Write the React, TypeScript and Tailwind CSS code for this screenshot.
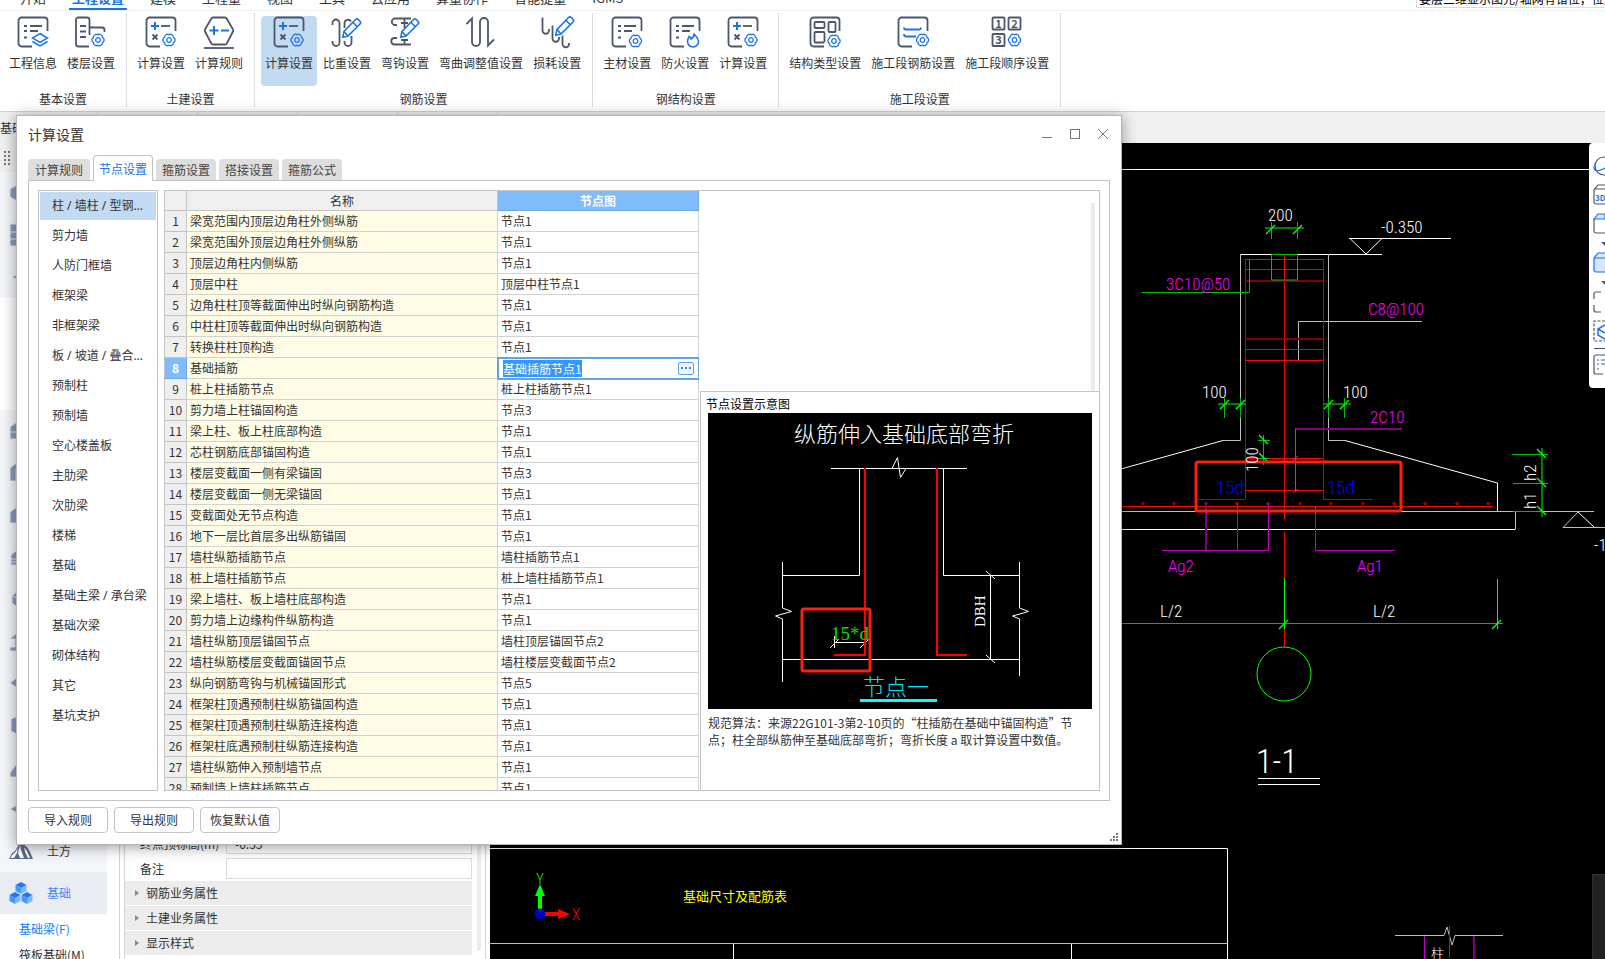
import * as React from "react"
import { useEffect, useRef, useState } from "react"
import { clsx } from "clsx"

const INK = "#4d566b"
const BLUE = "#1a73e8"

/* ---------- ribbon icons, all drawn on a 32px box ---------- */

const Gear = ({ x = 24, y = 24 }: { x?: number; y?: number }) => (
  <g transform={`translate(${x} ${y})`} stroke={BLUE} strokeWidth="1.3">
    <path d="M4.5 2.6A2.9 2.9 0 0 1 0 5.2A2.9 2.9 0 0 1-4.5 2.6A2.9 2.9 0 0 1-4.5-2.6A2.9 2.9 0 0 1 0-5.2A2.9 2.9 0 0 1 4.5-2.6A2.9 2.9 0 0 1 4.5 2.6Z" />
    <circle r="2.3" />
  </g>
)

const Pencil = () => (
  <g stroke={BLUE} strokeWidth="1.6">
    <path d="M24.5 3.5a2 2 0 0 1 2.800 0l1.700 1.700a2 2 0 0 1 0 2.800L17 20l-5.200 1.200L13 15.500Z" />
    <path d="M21.800 6.200L26.300 10.700M13 15.500L17 20" />
  </g>
)

const Frame = () => <path d="M15 30.500H4.500a3 3 0 0 1-3-3V4.500a3 3 0 0 1 3-3H27.500a3 3 0 0 1 3 3V15" />

const Lines = () => <path d="M7 10H10M13 10H25M7 15H10M13 15H21M7 21.500H10" />

const Sheet = () => (
  <>
    <Frame />
    <path d="M16 10H25" />
    <path d="M7.500 18.500L12.500 23.500M12.500 18.500L7.500 23.500" />
    <path d="M6 10H14M10 6V14" stroke={BLUE} strokeWidth="2" />
    <Gear />
  </>
)

const icons: Record<string, React.ReactNode> = {
  info: (
    <>
      <Frame />
      <Lines />
      <g stroke={BLUE} strokeWidth="1.5">
        <path d="M23 17.500L30.500 22L23 26.500L15.500 22Z" />
        <path d="M15.500 25.500L23 30L30.500 25.500" />
      </g>
    </>
  ),
  floors: (
    <>
      <path d="M14 30.500H3.500a2.500 2.500 0 0 1-2.500-2.500V4a2.500 2.500 0 0 1 2.500-2.500H12A2.500 2.500 0 0 1 14.500 4V19M14.500 11.500H27a2.500 2.500 0 0 1 2.500 2.500V16" />
      <path d="M5 10H11M5 15.500H11M5 21H11" />
      <Gear x={23} />
    </>
  ),
  calc: <Sheet />,
  rule: (
    <>
      <path d="M10 1.500H22a2 2 0 0 1 1.700 1L30 13.500a2 2 0 0 1 0 2L23.700 27.500a2 2 0 0 1-1.700 1H10a2 2 0 0 1-1.700-1L2 15.500a2 2 0 0 1 0-2L8.300 2.500a2 2 0 0 1 1.700-1Z" />
      <path d="M1 32H31" />
      <path d="M6.500 14.500H15.500M11 10V19M18 14.500H26" stroke={BLUE} strokeWidth="2" />
    </>
  ),
  weight: (
    <>
      <path d="M1.500 9V7a3.500 3.500 0 0 1 7 0V26.500a3.500 3.500 0 0 1-7 0V25" />
      <path d="M13.500 12V7A3.500 3.500 0 0 1 20 5.500M20.500 20V26.500a3.500 3.500 0 0 1-7 0V25" />
      <Pencil />
    </>
  ),
  hook: (
    <>
      <path d="M22 2.500H5A3.500 3.500 0 0 0 5 9H8" />
      <path d="M8 22H5A3.300 3.300 0 0 0 5 28.500H22M15.500 2.500V12M15.500 23.500V28.500M12 7H19M12 24H19" />
      <Pencil />
    </>
  ),
  bend: <path d="M1.500 8L7 2.500V26a4 4 0 0 0 8 0V6A4 4 0 0 1 23 6V29.500L29 23.500" />,
  loss: (
    <>
      <path d="M1.500 1.500V14.500a3.200 3.200 0 0 0 6.500 0V13M11.500 9.500V22.500a3.200 3.200 0 0 0 6.500 0V21M21.500 19.500V28a3.200 3.200 0 0 0 6.500 0V27" />
      <g transform="translate(3 -2)">
        <Pencil />
      </g>
    </>
  ),
  material: (
    <>
      <Frame />
      <Lines />
      <Gear x={24.5} y={25} />
    </>
  ),
  fire: (
    <>
      <Frame />
      <Lines />
      <path
        d="M25 17.500C25.500 20 29.500 21 29.500 25.500A5.500 5.500 0 0 1 18.500 25.500C18.500 23 19.500 22.500 20 20.500C21.500 21 22 22 22 23C24 22 25 20 25 17.500Z"
        stroke={BLUE}
        strokeWidth="1.5"
      />
    </>
  ),
  structure: (
    <>
      <Frame />
      <rect x="5.500" y="6" width="10" height="6" rx="1" />
      <rect x="19.500" y="6" width="7" height="10" rx="1" />
      <path d="M15.500 26.500H6.500a1 1 0 0 1-1-1V17a1 1 0 0 1 1-1H14.500a1 1 0 0 1 1 1V26" />
      <Gear x={25} y={25} />
    </>
  ),
  section: (
    <>
      <Frame />
      <path d="M7 11.500C7 13.500 8 13.500 9 13.500H22C23.500 13.500 24 13.500 24 11.500M7 18C7 20.500 8 20.500 9 20.500H19" stroke={BLUE} strokeWidth="1.8" />
      <Gear x={25.500} />
    </>
  ),
  order: (
    <>
      <rect x="1.500" y="1.500" width="12" height="12" rx="1" />
      <rect x="17.500" y="1.500" width="12" height="12" rx="1" />
      <rect x="1.500" y="18" width="12" height="12" rx="1" />
      <g fill={INK} stroke="none" fontSize="11" fontWeight="700" textAnchor="middle">
        <text x="7.500" y="11.500">1</text>
        <text x="23.500" y="11.500">2</text>
        <text x="7.500" y="28">3</text>
      </g>
      <Gear x={23.500} />
    </>
  ),
}

const menu = ["开始", "工程设置", "建模", "工程量", "视图", "工具", "云应用", "算量协作", "智能提量", "IGMS"]

const ribbon = [
  { title: "基本设置", items: [["工程信息", "info"], ["楼层设置", "floors"]] },
  { title: "土建设置", items: [["计算设置", "calc"], ["计算规则", "rule"]] },
  {
    title: "钢筋设置",
    items: [["计算设置", "calc"], ["比重设置", "weight"], ["弯钩设置", "hook"], ["弯曲调整值设置", "bend"], ["损耗设置", "loss"]],
  },
  { title: "钢结构设置", items: [["主材设置", "material"], ["防火设置", "fire"], ["计算设置", "calc"]] },
  {
    title: "施工段设置",
    items: [["结构类型设置", "structure"], ["施工段钢筋设置", "section"], ["施工段顺序设置", "order"]],
  },
]

const tabs = ["计算规则", "节点设置", "箍筋设置", "搭接设置", "箍筋公式"]

const categories = [
  "柱 / 墙柱 / 型钢...", "剪力墙", "人防门框墙", "框架梁", "非框架梁", "板 / 坡道 / 叠合...",
  "预制柱", "预制墙", "空心楼盖板", "主肋梁", "次肋梁", "楼梯", "基础", "基础主梁 / 承台梁",
  "基础次梁", "砌体结构", "其它", "基坑支护",
]

const rows = [
  ["梁宽范围内顶层边角柱外侧纵筋", "节点1"],
  ["梁宽范围外顶层边角柱外侧纵筋", "节点1"],
  ["顶层边角柱内侧纵筋", "节点1"],
  ["顶层中柱", "顶层中柱节点1"],
  ["边角柱柱顶等截面伸出时纵向钢筋构造", "节点1"],
  ["中柱柱顶等截面伸出时纵向钢筋构造", "节点1"],
  ["转换柱柱顶构造", "节点1"],
  ["基础插筋", "基础插筋节点1"],
  ["桩上柱插筋节点", "桩上柱插筋节点1"],
  ["剪力墙上柱锚固构造", "节点3"],
  ["梁上柱、板上柱底部构造", "节点1"],
  ["芯柱钢筋底部锚固构造", "节点1"],
  ["楼层变截面一侧有梁锚固", "节点3"],
  ["楼层变截面一侧无梁锚固", "节点1"],
  ["变截面处无节点构造", "节点1"],
  ["地下一层比首层多出纵筋锚固", "节点1"],
  ["墙柱纵筋插筋节点", "墙柱插筋节点1"],
  ["桩上墙柱插筋节点", "桩上墙柱插筋节点1"],
  ["梁上墙柱、板上墙柱底部构造", "节点1"],
  ["剪力墙上边缘构件纵筋构造", "节点1"],
  ["墙柱纵筋顶层锚固节点", "墙柱顶层锚固节点2"],
  ["墙柱纵筋楼层变截面锚固节点", "墙柱楼层变截面节点2"],
  ["纵向钢筋弯钩与机械锚固形式", "节点5"],
  ["框架柱顶遇预制柱纵筋锚固构造", "节点1"],
  ["框架柱顶遇预制柱纵筋连接构造", "节点1"],
  ["框架柱底遇预制柱纵筋连接构造", "节点1"],
  ["墙柱纵筋伸入预制墙节点", "节点1"],
  ["预制墙上墙柱插筋节点", "节点1"],
]

const Ribbon = () => (
  <header className="shrink-0 bg-white">
    <div className="flex h-[11px] items-end justify-between overflow-hidden border-b border-[#f0f0f0]">
      <nav className="flex items-end gap-5 pl-[17px] text-[13px] leading-4">
        {menu.map((name, i) => (
          <a
            key={name}
            href="#"
            className={clsx(
              "shrink-0 border-b-2 px-[3px] pb-0.5",
              i === 1 ? "border-[#1a73e8] font-bold text-[#1a73e8]" : "border-transparent",
            )}
          >
            {name}
          </a>
        ))}
      </nav>
      <div className="mb-0.5 w-[189px] shrink-0 overflow-hidden border-b border-l border-[#dcdcdc] pl-0.5 leading-4 whitespace-nowrap text-black">
        娄层三维显示图元/轴网有错位，位置
      </div>
    </div>

    <div className="flex border-b border-[#d4d4d4] pt-0.5 pb-1">
      {ribbon.map((group, g) => (
        <section key={group.title} className="group flex shrink-0 flex-col items-center border-r border-[#dcdcdc]">
          <div className="flex gap-0.5 pt-[3px] pr-[7px] pl-1.5 group-first:pl-[5px]">
            {group.items.map(([label, icon], i) => (
              <button
                key={label}
                className={clsx(
                  "flex h-[70px] flex-col items-center gap-[7px] rounded px-1",
                  g === 2 && i === 0 && "bg-[#c2daf2]",
                )}
              >
                <svg viewBox="0 0 32 32" className="size-8 overflow-visible" fill="none" stroke={INK} strokeWidth="1.800">
                  {icons[icon]}
                </svg>
                <span className="leading-4">{label}</span>
              </button>
            ))}
          </div>
          <h2 className="mt-[5px] leading-4">{group.title}</h2>
        </section>
      ))}
    </div>
  </header>
)

/* ---------- left component list ---------- */

const glyphs = [
  <path d="M1 8L12 2L23 8V16L12 22L1 16Z" />,
  <path d="M1 1H23V23H1ZM1 9H23M1 16H23" />,
  <path d="M3 12L14 7L22 12L14 17Z" />,
  <path d="M1 8L8 3H22V20H1ZM1 13H22M8 3V20" />,
  <path d="M1 7L6 3H22V16H16V8H7V20H1Z" />,
  <path d="M1 9L11 2V20H1ZM12 2H22V20H12Z" />,
  <path d="M2 10L12 2L22 10V20H2ZM2 14H22M2 17H22" />,
  <path d="M3 9L10 3L20 6V16L10 21L3 16ZM3 9L10 12V21" />,
  <path d="M1 10L10 2L22 10H15V18H22V22H1V18H6V10Z" />,
  <path d="M1 12L10 5L22 12L10 18ZM7 12H14" />,
  <path d="M2 6L12 2L22 6V18L12 23L2 18ZM7 10H12V15" />,
  <path d="M1 18L12 3L23 18V22H1Z" />,
  <path d="M1 12L12 6L23 12L12 18Z" />,
]

const Glyph = ({ i }: { i: number }) => (
  <div className="flex h-[42px] shrink-0 items-center pl-[9px]">
    <svg viewBox="0 0 24 24" className="size-6" fill="#8b9cc0" stroke="#e4e9f2" strokeWidth="1">
      {glyphs[i]}
    </svg>
  </div>
)

const Sidebar = () => (
  <aside className="flex w-[107px] shrink-0 flex-col overflow-hidden">
    <div className="flex h-[29px] shrink-0 items-center bg-[#f0f0f0] pl-1">
      <svg viewBox="0 0 6 14" className="h-3.5 w-1.5" fill="#777">
        {[0, 4, 8, 12].map((y) => (
          <path key={y} d={`M0 ${y}h2v2h-2zM4 ${y}h2v2h-2z`} />
        ))}
      </svg>
    </div>
    <div className="bg-[#f4f6f9]">{[0, 1, 2].map((i) => <Glyph key={i} i={i} />)}</div>
    <div className="h-28 shrink-0 bg-white" />
    <div className="bg-[#f4f6f9]">
      {[3, 4, 5, 6, 7, 8, 9, 10, 11, 12].map((i) => (
        <Glyph key={i} i={i} />
      ))}
      <div className="flex h-[42px] items-center gap-3.5 pl-[9px]">
        <svg viewBox="0 0 24 16" className="h-4 w-6">
          <path d="M0 16L3 10L6 8L9 3L11 0L14 1L18 4L21 9L24 16Z" fill="#5c6b8f" />
          <path d="M1.500 15L4 11L6.500 9L9 5L8 10L5 15ZM11 2L12 7L15 15H11L9 10ZM15 4L18 8L21 15H19L16 9Z" fill="#fff" />
        </svg>
        土方
      </div>
    </div>
    <div className="flex h-[42px] shrink-0 items-center gap-3.5 bg-[#e9ecf1] pl-[9px] text-[#3f86f3]">
      <svg viewBox="0 0 24 22" className="h-[22px] w-6">
        {[[12, 0], [6, 10], [18, 10]].map(([x, y]) => (
          <g key={x} transform={`translate(${x} ${y})`}>
            <path d="M0 0L5.500 3L0 6L-5.500 3Z" fill="#1f78f0" />
            <path d="M-5.500 3L0 6V12L-5.500 9Z" fill="#4696fa" />
            <path d="M5.500 3L0 6V12L5.500 9Z" fill="#7db6fb" />
          </g>
        ))}
      </svg>
      基础
    </div>
    <a href="#" className="mt-0.5 shrink-0 pl-[19px] leading-[26px] text-[#0a84ff]">基础梁(F)</a>
    <a href="#" className="shrink-0 pl-[19px] leading-[26px]">筏板基础(M)</a>
  </aside>
)

const Properties = () => (
  <aside className="ml-3 flex w-[367px] shrink-0 border-x border-[#d4d4d4] pl-1">
    <div className="flex flex-1 flex-col justify-end border-l border-[#d4d4d4] pb-[3px]">
      {[["终点顶标高(m)", "-0.55"], ["备注", ""]].map(([label, value]) => (
        <label key={label} className="flex h-[25px] items-center">
          <span className="w-[101px] shrink-0 pl-[15px]">{label}</span>
          <input defaultValue={value} className="h-[21px] w-[246px] border border-[#dcdcdc] px-2 outline-none" />
        </label>
      ))}
      {["钢筋业务属性", "土建业务属性", "显示样式"].map((name) => (
        <button key={name} className="mb-px flex h-6 w-[347px] items-center gap-[7px] bg-[#ececec] pl-2.5">
          <svg viewBox="0 0 4 6" className="h-1.5 w-1" fill="#888">
            <path d="M0 0L4 3L0 6Z" />
          </svg>
          {name}
        </button>
      ))}
    </div>
    <div className="mr-1 mb-2 w-1 rounded-full bg-[#ececec]" />
  </aside>
)

/* ---------- CAD canvas ---------- */

const Slash = ({ x, y, flip = false }: { x: number; y: number; flip?: boolean }) => (
  <path d={flip ? `M${x - 5} ${y - 5}l9 9` : `M${x - 5} ${y + 5}l9 -9`} stroke="#00ff00" strokeWidth="1.5" />
)

const dots = [1143, 1174, 1206, 1237, 1268, 1300, 1331, 1363, 1394, 1425, 1457, 1488]

const Drawing = () => (
  <svg
    viewBox="490 143 1115 816"
    preserveAspectRatio="xMinYMin slice"
    className="absolute inset-0 h-full w-full font-['Roboto_Condensed','Liberation_Sans_Narrow','Noto_Sans_CJK_SC',sans-serif] font-light"
    fill="none"
  >
    <g stroke="#fff">
      <path d="M490 169.500H1605" />
      <path d="M1240.500 254.500H1382" />
      <path d="M1349 238.500H1451M1350 238.500L1366 254L1382 238.500" />
      <path d="M1121 469L1223 440.500M1345 440.500L1497.500 483V511" />
      <path d="M1121 529.500H1515" />
      <path d="M1578 512L1594 527" />
      <path d="M1258 778.500H1320M1258 784.500H1320" />
      <path d="M490 848.500H1227.500V959M733.500 943V959M1071.500 943V959" />
    </g>
    <g stroke="#c0c0c0">
      <path d="M1240.500 254V440.500H1223M1328.500 254V440.500H1345" />
      <path d="M1422 321.500H1298.500V360" />
      <path d="M1121 511.500H1594M1515.500 511V529.500" />
      <path d="M1578 512L1563 527.500H1605" />
      <path d="M490 943.500H1227" />
      <path d="M1395 935.500H1444L1447 927L1452 945L1455 935.500H1503" />
    </g>
    <g stroke="#ff0000">
      <path d="M1245.500 259V499M1323.500 259V499" stroke="#c80000" />
      <path d="M1284.500 255V519M1284.500 532V578M1284.500 629V647" />
      <path d="M1245 259.500H1323M1245 269.500H1323M1245 349.500H1323M1245 360.500H1323M1245 458.500H1323M1245 490.500H1323" />
      <path d="M1245 281H1323M1245 339H1323" stroke="#800000" strokeWidth="2" />
      <path d="M1198 499.500H1245M1323 499.500H1372" stroke="#c80000" />
      <path d="M1121 506.500H1493" />
      {dots.map((x) => (
        <circle key={x} cx={x} cy="503.500" r="1" />
      ))}
      <path d="M1449.500 926V958" />
    </g>
    <g stroke="#00c000">
      <path d="M1271.500 254.500H1297.500V280H1271.500Z" />
      <path d="M1142 292.500H1249.500V260" />
      <path d="M1271.500 222V239M1297.500 222V239M1224.500 398V418M1240.500 398V418M1328.500 398V418M1344.500 398V418" />
      <path d="M1265 228H1304M1218 404H1246M1323 404H1351M1542 448V517" stroke="#008000" strokeWidth="2" />
      <path d="M1263.500 435V465M1258 440.500H1270M1258 458.500H1270M1512 454.500H1548M1513 483.500H1548M1513 511.500H1542" />
      <path d="M1121 623.500H1503" />
    </g>
    <g stroke="#00ff00">
      <path d="M1284.500 578V629M1497.500 579V629" />
      <circle cx="1284" cy="674" r="27" />
    </g>
    <Slash x={1271} y={229} />
    <Slash x={1298} y={229} />
    <Slash x={1225} y={404} />
    <Slash x={1241} y={404} />
    <Slash x={1329} y={404} />
    <Slash x={1345} y={404} />
    <Slash x={1284} y={624} />
    <Slash x={1497} y={624} />
    <Slash x={1264} y={440} flip />
    <Slash x={1264} y={458} flip />
    <Slash x={1542} y={454} flip />
    <Slash x={1542} y={483} flip />
    <Slash x={1542} y={511} flip />
    <g stroke="#c000c0">
      <path d="M1402 429H1295" stroke="#800080" strokeWidth="2" />
      <path d="M1295.500 429V492M1293 460L1298 456M1293 493L1298 489" stroke="#ff00ff" />
      <path d="M1206 503V550M1474 936V959" stroke="#800080" strokeWidth="2" />
      <path d="M1237.500 503V550M1268.500 503V550.500M1162 550.500H1269M1315.500 507V550.500H1395M1424.500 936V959" />
    </g>
    <rect x="1196" y="462" width="205" height="49" rx="2" stroke="#ff1e10" strokeWidth="3" />

    <g fill="#fff" fontSize="17">
      <text x="1268" y="221">200</text>
      <text x="1381" y="233">-0.350</text>
      <text x="1202" y="398">100</text>
      <text x="1343" y="398">100</text>
      <text transform="translate(1258 472) rotate(-90)">100</text>
      <text transform="translate(1536 481) rotate(-90)">h2</text>
      <text transform="translate(1536 509) rotate(-90)">h1</text>
      <text x="1594" y="551">-1</text>
      <text x="1160" y="617">L/2</text>
      <text x="1373" y="617">L/2</text>
      <text x="1256" y="773" fontSize="34">1-1</text>
      <text x="1431" y="958" fontSize="13">柱</text>
    </g>
    <g fill="#ff00ff" fontSize="17">
      <text x="1166" y="290">3C10@50</text>
      <text x="1368" y="315">C8@100</text>
      <text x="1370" y="423">2C10</text>
      <text x="1168" y="572">Ag2</text>
      <text x="1357" y="572">Ag1</text>
    </g>
    <g fill="#0000ff" fontSize="19">
      <text x="1216" y="494">15d</text>
      <text x="1327" y="494">15d</text>
    </g>
    <text x="735" y="901" fontSize="13" fill="#ffff00" textAnchor="middle" className="font-normal">基础尺寸及配筋表</text>

    {/* UCS axes */}
    <path d="M540 910V894" stroke="#00ff00" strokeWidth="4" />
    <path d="M535 896L540 884L545 896Z" fill="#00ff00" />
    <path d="M544 914H558" stroke="#ff0000" strokeWidth="4" />
    <path d="M558 909L570 914L558 919Z" fill="#ff0000" />
    <circle cx="540" cy="914" r="5.500" fill="#0000c0" />
    <text x="540" y="884" fontSize="15" fill="#00ff00" textAnchor="middle">Y</text>
    <text x="576" y="920" fontSize="16" fill="#ff0000" textAnchor="middle">X</text>
  </svg>
)

const Palette = () => (
  <div className="absolute top-0 right-0 w-4 overflow-hidden rounded-l-sm bg-white">
    <svg viewBox="0 0 16 245" className="h-[245px] w-4" fill="none" stroke={INK} strokeWidth="1.200">
      <circle cx="15" cy="23" r="9" />
      <path d="M7 19C3 26 5 31 16 25" stroke={BLUE} />
      <path d="M16 61H7a2 2 0 0 1-2-2V47L9 42H16M5 46H16" />
      <text x="6" y="58" fontSize="8" fontWeight="700" fill={BLUE} stroke="none">3D</text>
      <path d="M5 76L9 71H16V76Z" fill="#d5e6fb" stroke={BLUE} />
      <path d="M16 90H7a2 2 0 0 1-2-2V76" />
      <path d="M12 99H16V103Z" fill={INK} stroke="none" />
      <path d="M16 129H7a2 2 0 0 1-2-2V115L9 110H16M5 115H16" fill="#d5e6fb" stroke={BLUE} />
      <path d="M12 138H16V142Z" fill={INK} stroke="none" />
      <path d="M12 149H7a2 2 0 0 0-2 2V156M5 162V167a2 2 0 0 0 2 2H12" />
      <path d="M16 178H5V198H16" strokeDasharray="3 1.500" />
      <path d="M16 182L9 186V192L16 196M9 186L16 190" stroke={BLUE} strokeWidth="1.500" />
      <path d="M5 205.500H16" />
      <path d="M16 212H7a2 2 0 0 0-2 2V229a2 2 0 0 0 2 2H14M8 217H10M12 217H16M8 221H10M12 221H16M8 226H10" />
    </svg>
  </div>
)

/* ---------- settings dialog ---------- */

const NodePreview = () => (
  <svg viewBox="708 413 384 296" className="w-full bg-black" fill="none">
    <g stroke="#fff">
      <path d="M831 468.500H892L897.500 457.500L900.500 477.500L906 468.500M892 468.500H967" />
      <path d="M859.500 468V575.500H782M943.500 468V575.500H1019" />
      <path d="M782.500 562V608L791.500 611.500L775.500 616L782.500 619V682" />
      <path d="M1019.500 562V608L1028.500 611.500L1012.500 616L1019.500 619V676" />
      <path d="M782 659.500H1019M990.500 575V659M986 571L995 579M986 655L995 663" />
      <path d="M834.500 636V648M834 642.500H865M830 648L839 639M860 648L869 639" />
    </g>
    <path d="M865 468V655H834M937 468V655H967" stroke="#ff0000" strokeWidth="2" />
    <text x="794" y="442" fontSize="22" fill="#fff" className="font-light">纵筋伸入基础底部弯折</text>
    <text x="831" y="640" fontSize="19" fill="#00e000" className="font-['Liberation_Serif',serif]">15*d</text>
    <text transform="translate(985 627) rotate(-90)" fontSize="15" fill="#fff" className="font-['Liberation_Serif',serif]">DBH</text>
    <text x="863" y="695" fontSize="22" fill="#00e5f0" className="font-light">节点一</text>
    <path d="M860 700.500H937" stroke="#00ffff" strokeWidth="3" />
    <rect x="802" y="609" width="68" height="62" rx="2" stroke="#ff1e10" strokeWidth="3" />
  </svg>
)

const NodeTable = () => {
  const inputRef = useRef<HTMLInputElement>(null)

  useEffect(() => {
    inputRef.current?.focus()
    inputRef.current?.select()
  }, [])

  return (
    <table className="w-[534px] table-fixed border-separate border-spacing-0 leading-4">
      <colgroup>
        <col className="w-[22px]" />
        <col className="w-[311px]" />
        <col className="w-[201px]" />
      </colgroup>
      <thead>
        <tr className="h-5">
          <th className="border-r border-b border-[#c4c4c4] bg-[#efefef] p-0" />
          <th className="border-r border-b border-[#c4c4c4] bg-[#efefef] p-0 font-normal">名称</th>
          <th className="border-r border-b border-[#69a9ea] bg-[#80bbfb] p-0 font-bold text-white">节点图</th>
        </tr>
      </thead>
      <tbody>
        {rows.map(([name, node], i) => (
          <tr key={name} className="h-[21px]">
            <th
              scope="row"
              className={clsx(
                "border-r border-b p-0",
                i === 7
                  ? "border-[#69a9ea] bg-[#80bbfb] font-bold text-white"
                  : "border-[#c4c4c4] bg-[#efefef] font-normal",
              )}
            >
              {i + 1}
            </th>
            <td className="border-r border-b border-[#d2d2d2] bg-[#fffde6] py-0 pr-0 pl-[3px]">{name}</td>
            {i === 7 ? (
              <td className="border-r border-b border-[#d2d2d2] p-0 outline-2 -outline-offset-1 outline-[#62a3e6]">
                <div className="flex items-center justify-between pr-1 pl-[5px]">
                  <input
                    ref={inputRef}
                    aria-label={name}
                    defaultValue={node}
                    className="h-[18px] w-40 outline-none selection:bg-[#3399ff] selection:text-white"
                  />
                  <button className="flex h-[13px] w-4 items-center justify-center gap-0.5 rounded-xs border border-[#62a3e6] bg-[#eef5fd]">
                    <i className="size-0.5 bg-[#3b87e0]" />
                    <i className="size-0.5 bg-[#3b87e0]" />
                    <i className="size-0.5 bg-[#3b87e0]" />
                  </button>
                </div>
              </td>
            ) : (
              <td className="border-r border-b border-[#d2d2d2] py-0 pr-0 pl-[3px]">{node}</td>
            )}
          </tr>
        ))}
      </tbody>
    </table>
  )
}

const SettingsDialog = () => {
  const [tab, setTab] = useState(1)
  const [category, setCategory] = useState(0)

  return (
    <div
      role="dialog"
      className="absolute top-[115px] right-[483px] bottom-[114px] left-4 flex flex-col border border-[#b4b4b4] bg-white px-[11px] shadow-[0_2px_14px_rgba(0,0,0,0.4)]"
    >
      <div className="flex h-[39px] shrink-0 items-center justify-between pr-0.5 pb-[3px]">
        <h1 className="text-sm leading-5">计算设置</h1>
        <div className="flex gap-[18px] text-[#777]">
          <button aria-label="最小化">
            <svg viewBox="0 0 10 10" className="size-2.5" stroke="currentColor"><path d="M0 8.500H10" /></svg>
          </button>
          <button aria-label="最大化">
            <svg viewBox="0 0 10 10" className="size-2.5" fill="none" stroke="currentColor"><rect x=".5" y=".5" width="9" height="9" /></svg>
          </button>
          <button aria-label="关闭">
            <svg viewBox="0 0 10 10" className="size-2.5" stroke="currentColor"><path d="M0 0L10 10M10 0L0 10" /></svg>
          </button>
        </div>
      </div>

      <div role="tablist" className="z-10 -mb-px flex shrink-0 items-end gap-[3px]">
        {tabs.map((name, i) => (
          <button
            key={name}
            role="tab"
            aria-selected={i === tab}
            onClick={() => setTab(i)}
            className={clsx(
              "w-[60px] rounded-t leading-4",
              i === tab
                ? "h-[26px] border border-b-0 border-[#c0c4c8] bg-white text-[#1a73e8]"
                : "mb-px h-[21px] bg-[#dedede] text-[#444] first:w-[62px]",
            )}
          >
            {name}
          </button>
        ))}
      </div>

      <div className="flex min-h-0 flex-1 gap-1.5 border border-[#c0c4c8] p-[9px]">
        <ul className="w-[120px] shrink-0 border border-[#c4c4c4] p-px font-['Noto_Sans','Noto_Sans_CJK_SC',sans-serif]">
          {categories.map((name, i) => (
            <li key={name} className="mb-0.5">
              <button
                onClick={() => setCategory(i)}
                className={clsx(
                  "h-7 w-full pl-3 text-left leading-4 whitespace-nowrap",
                  i === category && "bg-[#c2daf2]",
                )}
              >
                {name}
              </button>
            </li>
          ))}
        </ul>

        <div className="flex min-w-0 flex-1 overflow-hidden border border-[#c4c4c4]">
          <div className="shrink-0 overflow-hidden">
            <NodeTable />
          </div>
          <div className="ml-px flex flex-1 flex-col">
            <div className="flex h-[200px] shrink-0 justify-end pt-3 pr-1">
              <div className="w-1 bg-[#ececec]" />
            </div>
            <div className="flex-1 border-t border-l border-[#c4c4c4]">
              <h3 className="px-[5px] pt-[3px] pb-px leading-[17px] text-black">节点设置示意图</h3>
              <div className="px-[7px]">
                <NodePreview />
                <p className="pt-[5px] leading-[17px]">
                  规范算法：来源22G101-3第2-10页的“柱插筋在基础中锚固构造”节点；柱全部纵筋伸至基础底部弯折；弯折长度 a 取计算设置中数值。
                </p>
              </div>
            </div>
          </div>
        </div>
      </div>

      <div className="flex h-[43px] shrink-0 gap-1.5 pt-1.5">
        {["导入规则", "导出规则", "恢复默认值"].map((name) => (
          <button key={name} className="h-[26px] w-20 rounded border border-[#c4c4c4] leading-4">
            {name}
          </button>
        ))}
      </div>

      <svg viewBox="0 0 8 8" className="absolute right-[3px] bottom-[3px] size-2" fill="#777">
        <path d="M6 0h2v2h-2zM3 3h2v2h-2zM6 3h2v2h-2zM0 6h2v2h-2zM3 6h2v2h-2zM6 6h2v2h-2z" />
      </svg>
    </div>
  )
}

export default function App() {
  return (
    <div className="relative flex h-screen flex-col overflow-hidden bg-white font-['Noto_Sans_CJK_SC',sans-serif] text-xs text-[#333]">
      <Ribbon />
      <div className="flex h-[31px] shrink-0 items-center bg-[#f0f0f0]">
        <span className="w-[97px]">基础</span>
        {[0, 1, 2, 3, 4].map((i) => (
          <span key={i} className="h-full w-[100px] border-l border-[#d4d4d4]" />
        ))}
      </div>
      <main className="flex min-h-0 flex-1">
        <Sidebar />
        <Properties />
        <div className="relative ml-1 flex-1 overflow-hidden bg-black">
          <Drawing />
          <Palette />
          <div className="absolute right-0 bottom-0 h-[85px] w-[13px] border-t border-l border-[#333] bg-[#222]" />
        </div>
      </main>
      <SettingsDialog />
    </div>
  )
}
